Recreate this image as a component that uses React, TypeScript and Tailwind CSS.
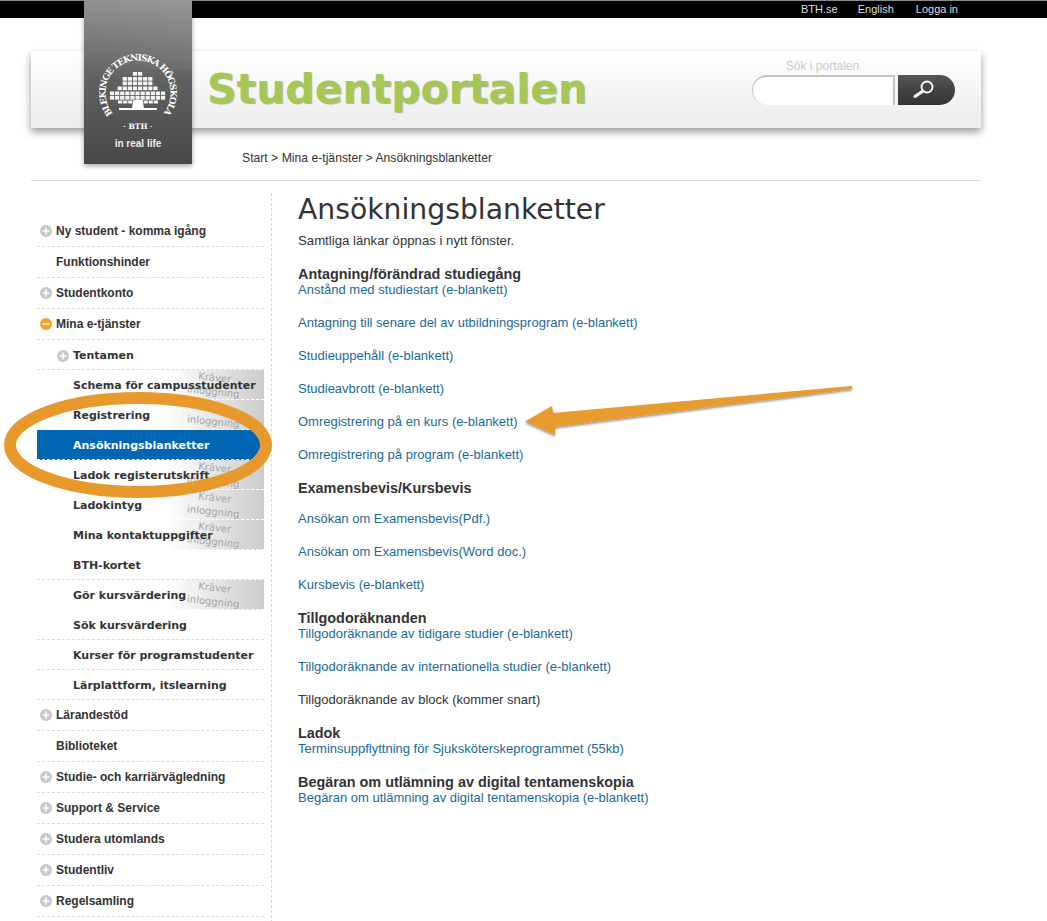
const sans = "font-['Liberation_Sans',Arial,sans-serif]";

type NavItem = { label: string; icon?: "plus" | "minus"; sub?: boolean; login?: boolean; active?: boolean };

const nav: NavItem[] = [
  { label: "Ny student - komma igång", icon: "plus" },
  { label: "Funktionshinder" },
  { label: "Studentkonto", icon: "plus" },
  { label: "Mina e-tjänster", icon: "minus" },
  { label: "Tentamen", icon: "plus", sub: true },
  { label: "Schema för campusstudenter", sub: true, login: true },
  { label: "Registrering", sub: true, login: true },
  { label: "Ansökningsblanketter", sub: true, active: true },
  { label: "Ladok registerutskrift", sub: true, login: true },
  { label: "Ladokintyg", sub: true, login: true },
  { label: "Mina kontaktuppgifter", sub: true, login: true },
  { label: "BTH-kortet", sub: true },
  { label: "Gör kursvärdering", sub: true, login: true },
  { label: "Sök kursvärdering", sub: true },
  { label: "Kurser för programstudenter", sub: true },
  { label: "Lärplattform, itslearning", sub: true },
  { label: "Lärandestöd", icon: "plus" },
  { label: "Biblioteket" },
  { label: "Studie- och karriärvägledning", icon: "plus" },
  { label: "Support & Service", icon: "plus" },
  { label: "Studera utomlands", icon: "plus" },
  { label: "Studentliv", icon: "plus" },
  { label: "Regelsamling", icon: "plus" },
];

const sections = [
  { title: "Antagning/förändrad studiegång", gap: false, links: ["Anstånd med studiestart (e-blankett)", "Antagning till senare del av utbildningsprogram (e-blankett)", "Studieuppehåll (e-blankett)", "Studieavbrott (e-blankett)", "Omregistrering på en kurs (e-blankett)", "Omregistrering på program (e-blankett)"] },
  { title: "Examensbevis/Kursbevis", gap: true, links: ["Ansökan om Examensbevis(Pdf.)", "Ansökan om Examensbevis(Word doc.)", "Kursbevis (e-blankett)"] },
  { title: "Tillgodoräknanden", gap: false, links: ["Tillgodoräknande av tidigare studier (e-blankett)", "Tillgodoräknande av internationella studier (e-blankett)", "!Tillgodoräknande av block (kommer snart)"] },
  { title: "Ladok", gap: false, links: ["Terminsuppflyttning för Sjuksköterskeprogrammet (55kb)"] },
  { title: "Begäran om utlämning av digital tentamenskopia", gap: false, links: ["Begäran om utlämning av digital tentamenskopia (e-blankett)"] },
];

// tree crown of the seal: top y of each row and how many cells it has
const treeRows = [
  { y: 72, n: 2 },
  { y: 77, n: 6 },
  { y: 81.5, n: 6 },
  { y: 86.5, n: 8 },
  { y: 91.5, n: 11 },
  { y: 96, n: 11 },
];

function Seal() {
  const pitch = 5.1;
  const cells: React.ReactNode[] = [];
  treeRows.forEach((r) => {
    for (let i = 0; i < r.n; i++) {
      const x = 54 - (r.n * pitch) / 2 + i * pitch;
      cells.push(<rect key={`${r.y}-${i}`} x={x} y={r.y} width="4.2" height="3.7" fill="#f4f4f4" />);
    }
  });
  [34, 39.1, 44.2, 59.6, 64.7, 69.8].forEach((x) => {
    cells.push(<rect key={`low-${x}`} x={x} y="100.5" width="4.2" height="3" fill="#f4f4f4" />);
  });
  return (
    <svg className="absolute left-0 top-0" width="108" height="164" viewBox="0 0 108 164">
      <defs>
        <path id="sealRing" d="M 54 125.5 a 32.5 32.5 0 1 1 0.01 0" />
      </defs>
      <text fontFamily="'DejaVu Serif', serif" fontWeight="700" fontSize="8.8" fill="#fff">
        <textPath href="#sealRing" startOffset="14%" textLength="146" lengthAdjust="spacing">BLEKINGE TEKNISKA HÖGSKOLA</textPath>
      </text>
      <text x="54" y="128.5" textAnchor="middle" fontFamily="'DejaVu Serif', serif" fontWeight="700" fontSize="7.5" fill="#fff">· BTH ·</text>
      {cells}
      <rect x="35" y="108" width="38" height="2" fill="#fff" />
      <path d="M49.5 100h9l1.5 8h-12z" fill="#fff" />
    </svg>
  );
}

function Toggle({ kind, raised }: { kind: "plus" | "minus"; raised?: boolean }) {
  return (
    <span className={`flex w-3 h-3 rounded-full items-center justify-center shrink-0 ${raised ? "-mt-[2px]" : ""} ${kind === "plus" ? "bg-[#c8c8c8]" : "bg-[#f6a023]"}`}>
      <svg width="8" height="8" viewBox="0 0 8 8">
        <rect x="0.5" y="3.25" width="7" height="1.5" fill="#fff" />
        {kind === "plus" && <rect x="3.25" y="0.5" width="1.5" height="7" fill="#fff" />}
      </svg>
    </span>
  );
}

function NavRow({ item }: { item: NavItem }) {
  if (item.active) {
    return (
      <div className="h-[31px] -mt-px w-[227px] pt-[5px] bg-[#0066b3] border-b border-dashed border-white flex items-center pl-9 font-['DejaVu_Sans',sans-serif] font-bold text-[11px] text-white">
        {item.label}
      </div>
    );
  }
  return (
    <div
      className={`relative ${item.sub ? "h-[30px] pt-[4px]" : "h-[31px]"} w-[227px] flex items-center border-b border-dashed overflow-hidden ${
        item.login ? "border-white bg-gradient-to-r from-white from-[57%] to-[#cccccc]" : "border-[#dcdcdc]"
      } ${item.sub ? "font-['DejaVu_Sans',sans-serif] text-[11px]" : `${sans} text-[12px]`} font-bold text-[#333333]`}
    >
      {item.login && (
        <span className="absolute left-[147px] top-[1px] w-[60px] rotate-[6deg] text-center font-['DejaVu_Sans',sans-serif] font-normal text-[10px] leading-[14px] text-[#a6a6a6]">
          Kräver
          <br />
          inloggning
        </span>
      )}
      <span className={`relative flex items-center ${item.sub ? "pl-[20px]" : "pl-[3px]"}`}>
        <span className="w-[16px] shrink-0">{item.icon && <Toggle kind={item.icon} raised={item.sub} />}</span>
        <span className="whitespace-nowrap">{item.label}</span>
      </span>
    </div>
  );
}

export default function App() {
  return (
    <div className={`relative w-[1047px] h-[921px] overflow-hidden bg-white ${sans}`}>
      {/* top bar */}
      <div className="h-[18px] bg-black border-t border-[#8a8a8a] flex justify-end items-center pr-[89px] gap-5 text-[11px] text-[#dddddd]">
        <span>BTH.se</span>
        <span>English</span>
        <span className="ml-[2px]">Logga in</span>
      </div>

      {/* header */}
      <div className="mt-[33px] ml-[31px] w-[950px] h-[77px] bg-gradient-to-b from-white to-[#ececec] shadow-[0_4px_8px_rgba(0,0,0,0.4)] flex items-start justify-between pl-[176px] pr-[26px]">
        <div className="mt-[14px] font-['DejaVu_Sans',sans-serif] font-bold text-[41px] leading-[48px] text-[#a5c855] [text-shadow:1px_1px_1px_rgba(90,90,90,0.45)] whitespace-nowrap">
          Studentportalen
        </div>
        <div className="flex flex-col items-center mt-[8px]">
          <div className="text-[12px] leading-[14px] mb-[2px] text-[#cccccc] -ml-[62px]">Sök i portalen</div>
          <div className="flex gap-[3px]">
            <div className="w-[143px] h-[30px] rounded-l-full bg-white border-t-2 border-l border-r-2 border-[#c4c4c4] border-b-0" />
            <div className="w-[57px] h-[30px] rounded-r-full bg-gradient-to-b from-[#555555] to-[#333333] flex items-center justify-center pr-[5px]">
              <svg width="26" height="22" viewBox="0 0 26 22" fill="none">
                <circle cx="16" cy="8" r="5.5" stroke="#fff" strokeWidth="1.8" />
                <path d="M12 12 L4 17.5" stroke="#fff" strokeWidth="3" strokeLinecap="round" />
              </svg>
            </div>
          </div>
        </div>
      </div>

      {/* logo */}
      <div className="absolute left-[84px] top-0 w-[108px] h-[164px] bg-gradient-to-b from-[#8c8c8c] via-[#5f6060] to-[#484848] shadow-[0_2px_5px_rgba(0,0,0,0.35)]">
        <div className="absolute inset-x-0 top-0 h-[70px] bg-gradient-to-bl from-white/10 to-transparent" />
        <Seal />
        <div className="absolute left-0 right-0 top-[137px] text-center text-[10px] font-bold leading-[13px] text-[#eeeeee]">in real life</div>
      </div>

      {/* breadcrumb */}
      <div className="mt-[22px] ml-[242px] h-[16px] text-[12.2px] leading-[16px] text-[#333333]">Start &gt; Mina e-tjänster &gt; Ansökningsblanketter</div>
      <div className="mt-[14px] ml-[31px] w-[950px] h-px bg-[#dddddd]" />

      {/* body */}
      <div className="flex mt-[12px]">
        <div className="ml-[37px] w-[235px] h-[740px] pt-[23px] border-r border-dashed border-[#d8d8d8]">
          {nav.map((item) => (
            <NavRow key={item.label} item={item} />
          ))}
        </div>
        <div className="ml-[26px] text-[13px] leading-[15px]">
          <h1 className="font-['DejaVu_Sans',sans-serif] font-normal text-[28.25px] leading-[34px] text-[#333333] whitespace-nowrap">Ansökningsblanketter</h1>
          <p className="mt-[6px] text-[13.2px] text-[#333333]">Samtliga länkar öppnas i nytt fönster.</p>
          <div className="mt-[19px]">
            {sections.map((s) => (
              <div key={s.title} className="mb-[19px]">
                <h3 className="font-bold text-[14.4px] leading-[15px] text-[#333333]">{s.title}</h3>
                <div className={`flex flex-col gap-[18px] ${s.gap ? "mt-[15px]" : ""}`}>
                  {s.links.map((l) =>
                    l.startsWith("!") ? (
                      <span key={l} className="text-[#333333]">{l.slice(1)}</span>
                    ) : (
                      <a key={l} className="text-[#1a6a96]">{l}</a>
                    )
                  )}
                </div>
              </div>
            ))}
          </div>
        </div>
      </div>

      {/* annotations */}
      <svg className="absolute left-0 top-0 pointer-events-none" width="1047" height="921" viewBox="0 0 1047 921" fill="none">
        <defs>
          <filter id="arrowShadow" x="-5%" y="-20%" width="110%" height="140%">
            <feDropShadow dx="0" dy="1.5" stdDeviation="1.2" floodColor="#000" floodOpacity="0.45" />
          </filter>
        </defs>
        <ellipse cx="138" cy="445" rx="128" ry="47" stroke="#e8992c" strokeWidth="12" />
        <path d="M852 386 L553 413 L552 406 L525 421.5 L555 435 L555 427 L852 389 Z" fill="#e89b2e" filter="url(#arrowShadow)" />
      </svg>
    </div>
  );
}
